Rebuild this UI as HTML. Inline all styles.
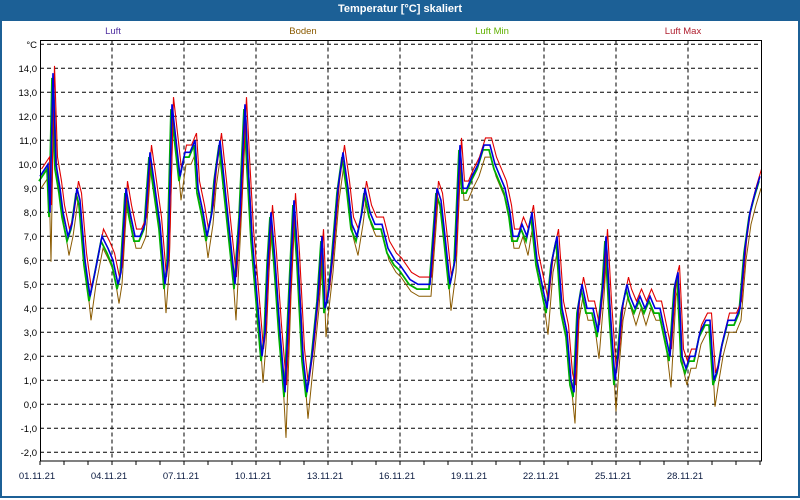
<!DOCTYPE html>
<html><head><meta charset="utf-8"><style>
body{margin:0;width:800px;height:500px;overflow:hidden;background:#fff;font-family:"Liberation Sans",sans-serif}
#title{position:absolute;left:0;top:0;width:800px;height:21px;background:#1c6096;color:#fff;font-weight:bold;font-size:11px;text-align:center;line-height:19px}
#frame{position:absolute;left:0;top:21px;width:796px;height:475px;border:2px solid #1c6096;border-top:none}
svg{position:absolute;left:0;top:0}
</style></head><body>
<div id="title">Temperatur [°C] skaliert</div>
<div id="frame"></div>
<svg id="s" width="800" height="500" font-family="Liberation Sans, sans-serif" font-size="9.5"></svg>
<script>
var s=document.getElementById('s'),h='';
function Y(t){return 44.3+(15-t)*24}
for(var t=15;t>=-2;t--){h+='<line x1="40" x2="761" y1="'+Y(t)+'" y2="'+Y(t)+'" stroke="#000" stroke-dasharray="4,3"/>';
 if(t<15)h+='<text x="37" y="'+(Y(t)+3.5)+'" text-anchor="end">'+(t.toFixed(1).replace('.',','))+'</text>';}
h+='<text x="37" y="48" text-anchor="end">°C</text>';
var labs=['01.11.21','04.11.21','07.11.21','10.11.21','13.11.21','16.11.21','19.11.21','22.11.21','25.11.21','28.11.21'];
for(var i=0;i<10;i++){var x=40+72*i;if(i>0)h+='<line x1="'+x+'" x2="'+x+'" y1="40.5" y2="461" stroke="#000" stroke-dasharray="4,3"/>';
 h+='<text x="'+(x-3)+'" y="479" text-anchor="middle" fill="#0a1a40">'+labs[i]+'</text>';}
for(var d=0;d<=30;d++){var x=40+24*d;h+='<line x1="'+x+'" x2="'+x+'" y1="461" y2="465" stroke="#000"/>';}
var P=[40,9.5,48,10,50,8,53,13.8,56,10,60,9,63,8,68,7,72,7.5,77,9,80,8.5,85,6,90,4.5,95,5.5,102,7,108,6.5,113,6,118,5,121,5.5,126,9,130,8,135,7,140,7,145,7.5,150,10.5,155,9,160,7.5,165,5,168,6,172,12.5,176,11,180,9.5,185,10.5,190,10.5,195,11,198,9,203,8,207,7,212,8,215,9.5,220,11,225,9,230,7,235,5,240,8,245,12.5,248,10,252,7,258,4,262,2,265,3,268,6,271,8,275,6,280,3,285,0.5,290,5,294,8.5,298,6,303,2,307,0.5,312,2,318,4.5,322,7,325,4,328,4.5,332,6,338,9,343,10.5,348,9,352,7.5,357,7,362,8,365,9,370,8,375,7.5,382,7.5,388,6.5,395,6,400,5.8,405,5.5,410,5.2,418,5,425,5,430,5,437,9,441,8.5,445,7,450,5,455,6,460,10.8,463,9,467,9,472,9.5,478,10,484,10.8,490,10.8,495,10,500,9.5,505,9,510,8,513,7,518,7,522,7.5,527,7,532,8,537,6,542,5,547,4,552,6,557,7,562,4,567,3,571,1,574,0.5,578,4,582,5,587,4,593,4,598,3,603,5,606,7,610,4,615,1,618,2,622,4,627,5,630,4.5,635,4,640,4.5,645,4,650,4.5,655,4,660,4,665,3,670,2,675,5,678,5.5,682,2,686,1.5,690,2,695,2,700,3,706,3.5,710,3.5,714,1,718,1.5,722,2.5,728,3.5,735,3.5,740,4,745,6.5,750,8,755,8.8,760,9.5];
function line(dx,f,c,w){var p=[];for(var i=0;i<P.length;i+=2){var t=P[i+1],pv=i>1?P[i-1]:t,nx=i<P.length-2?P[i+3]:t;p.push((P[i]+dx)+','+Y(f(t,pv,nx,i)).toFixed(1));}
 return '<polyline fill="none" stroke="'+c+'" stroke-width="'+w+'" points="'+p.join(' ')+'"/>';}
h+=line(1,function(t,p,n){var m=(t<p&&t<n)?(p+n)/2-t:0;return t-0.5-m*0.4},'#8a5a00',1);
h+=line(-1,function(t){return t-0.2},'#00b000',1.8);
h+=line(1.5,function(t){return t+0.3},'#e00000',1.1);
h+=line(0,function(t){return t},'#0000e0',1.6);
h+='<line x1="40.5" x2="40.5" y1="40" y2="461" stroke="#000"/><line x1="40" x2="762" y1="40.5" y2="40.5" stroke="#000"/><line x1="40" x2="762" y1="461" y2="461" stroke="#000"/><line x1="761.5" x2="761.5" y1="40" y2="461" stroke="#000"/>';
h+='<text x="113" y="34" text-anchor="middle" fill="#5030a0">Luft</text><text x="303" y="34" text-anchor="middle" fill="#8a5a00">Boden</text><text x="492" y="34" text-anchor="middle" fill="#60b000">Luft Min</text><text x="683" y="34" text-anchor="middle" fill="#b02030">Luft Max</text>';
s.innerHTML=h;
</script>
</body></html>
